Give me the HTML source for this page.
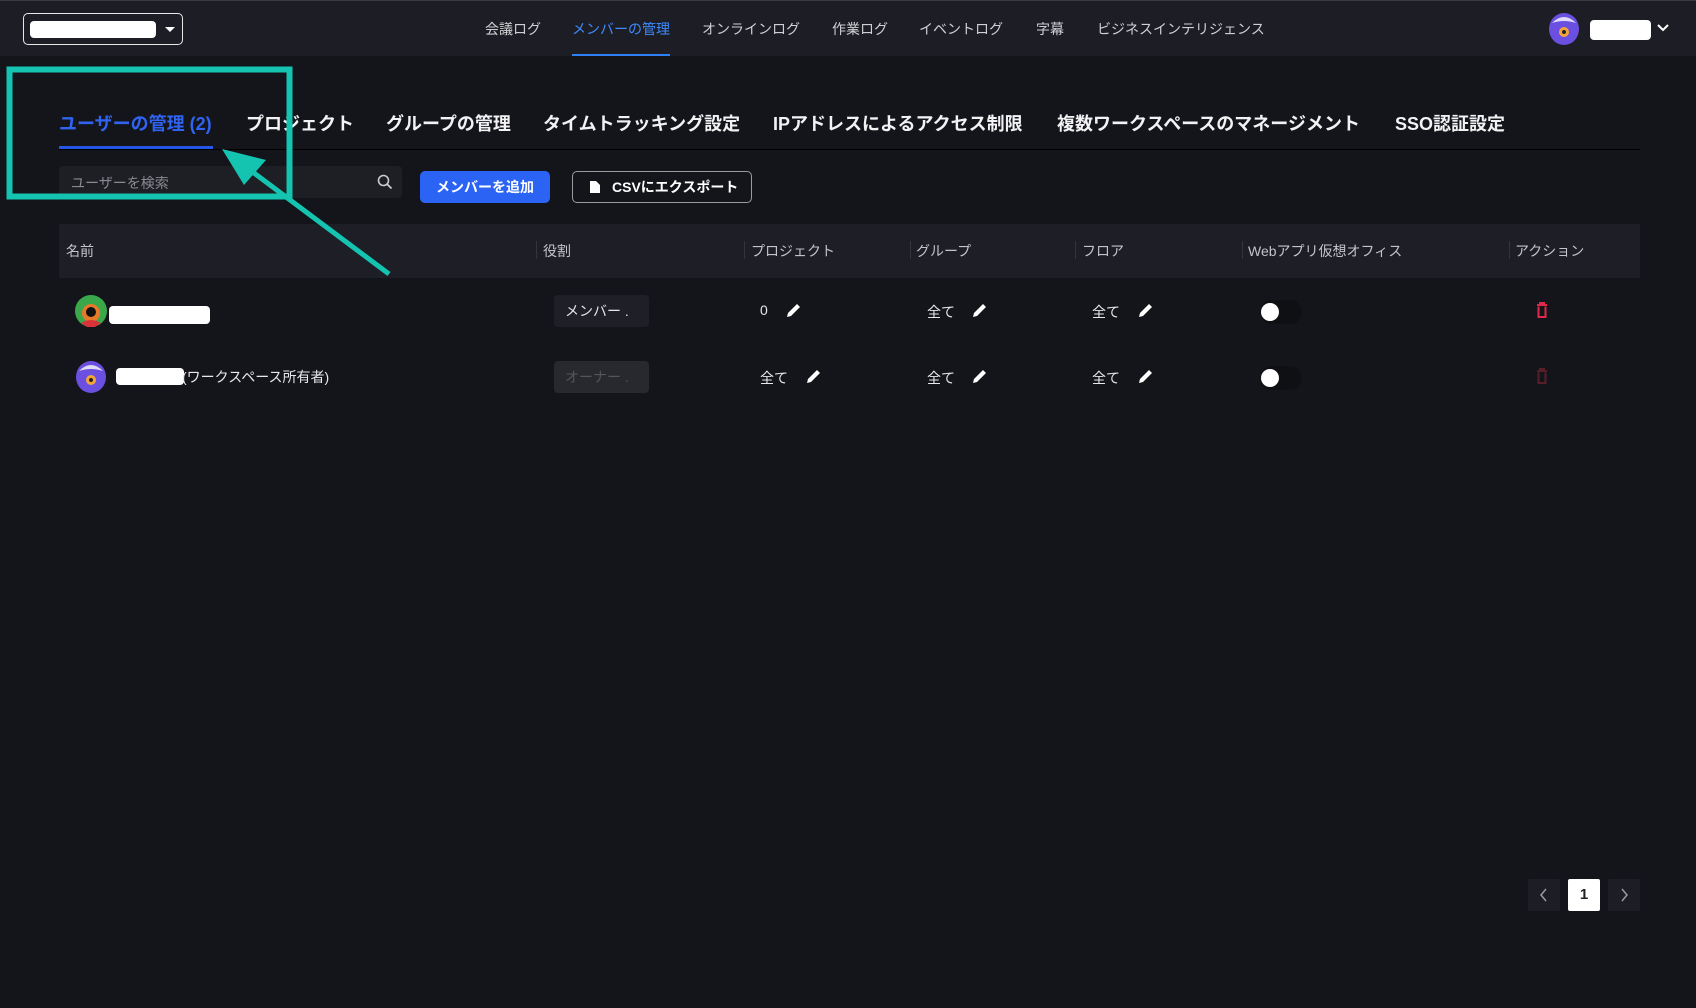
<!DOCTYPE html>
<html><head><meta charset="utf-8"><style>
*{box-sizing:border-box;margin:0;padding:0}
body{width:1696px;height:1008px;background:#14151b;font-family:"Liberation Sans","Noto Sans CJK JP",sans-serif;color:#e6e6e8;position:relative;overflow:hidden}
.a{position:absolute;white-space:nowrap}
.hdr{position:absolute;left:0;top:0;width:1696px;height:56px;background:#1d1e25;border-top:1px solid #3a3a40}
.nav{font-size:14px;color:#d0d0d4;top:19px}
.tab{font-size:18px;font-weight:bold;color:#f2f2f4;top:110px}
.th{font-size:14px;color:#c4c4c8;top:241px}
.sep{position:absolute;top:241px;width:1px;height:18px;background:#33343c}
.cell{font-size:14px;color:#e8e8ea}
.pill{position:absolute;width:95px;height:32px;border-radius:4px;background:#1f2027;font-size:14px;padding:6px 0 0 11px}
.tg{position:absolute;width:42px;height:24px;border-radius:12px;background:#0f1014}
.tg:after{content:"";position:absolute;left:1px;top:3px;width:18px;height:18px;border-radius:50%;background:#fff}
.pg{position:absolute;top:879px;width:32px;height:32px;border-radius:2px;background:#1d1e25;color:#9a9aa0;text-align:center;font-size:16px;line-height:32px}
</style></head><body>
<div class="hdr"></div>
<div class="a" style="left:23px;top:13px;width:160px;height:32px;border:1.5px solid #e8e8e8;border-radius:5px"></div>
<div class="a" style="left:30px;top:21px;width:126px;height:17px;background:#fff;border-radius:4px"></div>
<div class="a" style="left:165px;top:27px;width:0;height:0;border-left:5px solid transparent;border-right:5px solid transparent;border-top:5px solid #fff"></div>
<div class="a nav" style="left:485px">会議ログ</div>
<div class="a nav" style="left:572px;color:#3e8bff">メンバーの管理</div>
<div class="a" style="left:572px;top:54px;width:98px;height:2px;background:#2f7ff5"></div>
<div class="a nav" style="left:702px">オンラインログ</div>
<div class="a nav" style="left:832px">作業ログ</div>
<div class="a nav" style="left:919px">イベントログ</div>
<div class="a nav" style="left:1036px">字幕</div>
<div class="a nav" style="left:1097px">ビジネスインテリジェンス</div>
<svg class="a" style="left:1548px;top:13px" width="32" height="32"><ellipse cx="16" cy="16" rx="15" ry="16" fill="#6a4fe0"/><path d="M4 10 Q16 -2 28 10 Q16 6 4 10Z" fill="#e0dcf8"/><circle cx="16" cy="19" r="5" fill="#f4a43a"/><circle cx="16" cy="19" r="2" fill="#222"/></svg>
<div class="a" style="left:1590px;top:20px;width:61px;height:20px;background:#fff;border-radius:4px"></div>
<svg class="a" style="left:1657px;top:23px" width="12" height="10"><path d="M1 2 L6 7 L11 2" stroke="#fff" stroke-width="2" fill="none"/></svg>

<div class="a tab" style="left:59px;color:#2f63f0">ユーザーの管理 (2)</div>
<div class="a tab" style="left:246px">プロジェクト</div>
<div class="a tab" style="left:386px">グループの管理</div>
<div class="a tab" style="left:543px">タイムトラッキング設定</div>
<div class="a tab" style="left:773px">IPアドレスによるアクセス制限</div>
<div class="a tab" style="left:1057px">複数ワークスペースのマネージメント</div>
<div class="a tab" style="left:1395px">SSO認証設定</div>
<div class="a" style="left:59px;top:149px;width:1581px;height:1px;background:#000"></div>
<div class="a" style="left:59px;top:146px;width:154px;height:3px;background:#2655e8"></div>

<div class="a" style="left:59px;top:166px;width:343px;height:32px;background:#1e1f25;border-radius:4px"></div>
<div class="a" style="left:71px;top:173px;font-size:14px;color:#8a8a90">ユーザーを検索</div>
<svg class="a" style="left:377px;top:174px" width="16" height="16"><circle cx="6.5" cy="6.5" r="5" stroke="#ccc" stroke-width="1.6" fill="none"/><path d="M10 10 L14.5 14.5" stroke="#ccc" stroke-width="1.8"/></svg>
<div class="a" style="left:420px;top:171px;width:130px;height:32px;background:#2b63f5;border-radius:5px;font-size:14px;font-weight:bold;color:#fff;text-align:center;line-height:32px">メンバーを追加</div>
<div class="a" style="left:572px;top:171px;width:180px;height:32px;border:1px solid #9a9aa0;border-radius:5px;font-size:14px;font-weight:bold;color:#fff;line-height:30px;padding-left:39px">CSVにエクスポート</div>
<svg class="a" style="left:590px;top:181px" width="10" height="12"><path d="M0 0H6L10 4V12H0Z" fill="#fff"/></svg>

<div class="a" style="left:59px;top:224px;width:1581px;height:54px;background:#1d1e26"></div>
<div class="a th" style="left:66px">名前</div>
<div class="sep" style="left:536px"></div><div class="a th" style="left:543px">役割</div>
<div class="sep" style="left:744px"></div><div class="a th" style="left:751px">プロジェクト</div>
<div class="sep" style="left:910px"></div><div class="a th" style="left:916px">グループ</div>
<div class="sep" style="left:1075px"></div><div class="a th" style="left:1082px">フロア</div>
<div class="sep" style="left:1242px"></div><div class="a th" style="left:1248px">Webアプリ仮想オフィス</div>
<div class="sep" style="left:1509px"></div><div class="a th" style="left:1515px">アクション</div>

<svg class="a" style="left:75px;top:295px" width="32" height="32"><circle cx="16" cy="16" r="16" fill="#3aa84a"/><circle cx="16" cy="18" r="9" fill="#e8782a"/><circle cx="16" cy="17" r="5" fill="#111"/><path d="M6 28 Q16 22 26 28 L20 32 H12Z" fill="#d8333a"/></svg>
<div class="a" style="left:109px;top:306px;width:101px;height:18px;background:#fff;border-radius:4px"></div>
<div class="pill" style="left:554px;top:295px">メンバー .</div>
<div class="a cell" style="left:760px;top:302px">0</div>
<div class="a cell" style="left:927px;top:302px">全て</div>
<div class="a cell" style="left:1092px;top:302px">全て</div>
<div class="tg" style="left:1260px;top:300px"></div>
<svg class="a" style="left:1536px;top:302px" width="12" height="16"><path d="M1 3H11M4 3V1H8V3M2.5 4.5V15H9.5V4.5" stroke="#e0284a" stroke-width="2" fill="none"/></svg>

<svg class="a" style="left:75px;top:361px" width="32" height="32"><ellipse cx="16" cy="16" rx="15" ry="16" fill="#6a4fe0"/><path d="M4 10 Q16 -2 28 10 Q16 6 4 10Z" fill="#e0dcf8"/><circle cx="16" cy="19" r="5" fill="#f4a43a"/><circle cx="16" cy="19" r="2" fill="#222"/></svg>
<div class="a" style="left:116px;top:368px;width:68px;height:17px;background:#fff;border-radius:4px"></div>
<div class="a cell" style="left:182px;top:367px">(ワークスペース所有者)</div>
<div class="pill" style="left:554px;top:361px;background:#28292e;color:#55565c">オーナー .</div>
<div class="a cell" style="left:760px;top:368px">全て</div>
<div class="a cell" style="left:927px;top:368px">全て</div>
<div class="a cell" style="left:1092px;top:368px">全て</div>
<div class="tg" style="left:1260px;top:366px"></div>
<svg class="a" style="left:1536px;top:368px" width="12" height="16"><path d="M1 3H11M4 3V1H8V3M2.5 4.5V15H9.5V4.5" stroke="#5a1e2a" stroke-width="2" fill="none"/></svg>

<svg width="0" height="0" style="position:absolute"><defs><g id="pen"><path d="M2 15 L3 11 L12 2 L15 5 L6 14 Z" fill="#fff"/></g></defs></svg>
<svg class="a" style="left:785px;top:302px" width="17" height="17"><use href="#pen"/></svg>
<svg class="a" style="left:971px;top:302px" width="17" height="17"><use href="#pen"/></svg>
<svg class="a" style="left:1137px;top:302px" width="17" height="17"><use href="#pen"/></svg>
<svg class="a" style="left:805px;top:368px" width="17" height="17"><use href="#pen"/></svg>
<svg class="a" style="left:971px;top:368px" width="17" height="17"><use href="#pen"/></svg>
<svg class="a" style="left:1137px;top:368px" width="17" height="17"><use href="#pen"/></svg>

<div class="pg" style="left:1528px"><svg width="32" height="32"><path d="M18 10 L13 16 L18 22" stroke="#9a9aa0" stroke-width="1.5" fill="none"/></svg></div>
<div class="pg" style="left:1568px;background:#fff;color:#222;font-weight:bold;font-size:15px">1</div>
<div class="pg" style="left:1608px"><svg width="32" height="32"><path d="M14 10 L19 16 L14 22" stroke="#9a9aa0" stroke-width="1.5" fill="none"/></svg></div>

<svg class="a" style="left:0;top:0" width="420" height="300">
<rect x="9.5" y="69.5" width="280" height="127" fill="none" stroke="#14c4b0" stroke-width="6"/>
<path d="M389 274 L238 161" stroke="#14c4b0" stroke-width="5"/>
<path d="M222 149 L266 160 L244 185 Z" fill="#14c4b0"/>
</svg>
</body></html>
